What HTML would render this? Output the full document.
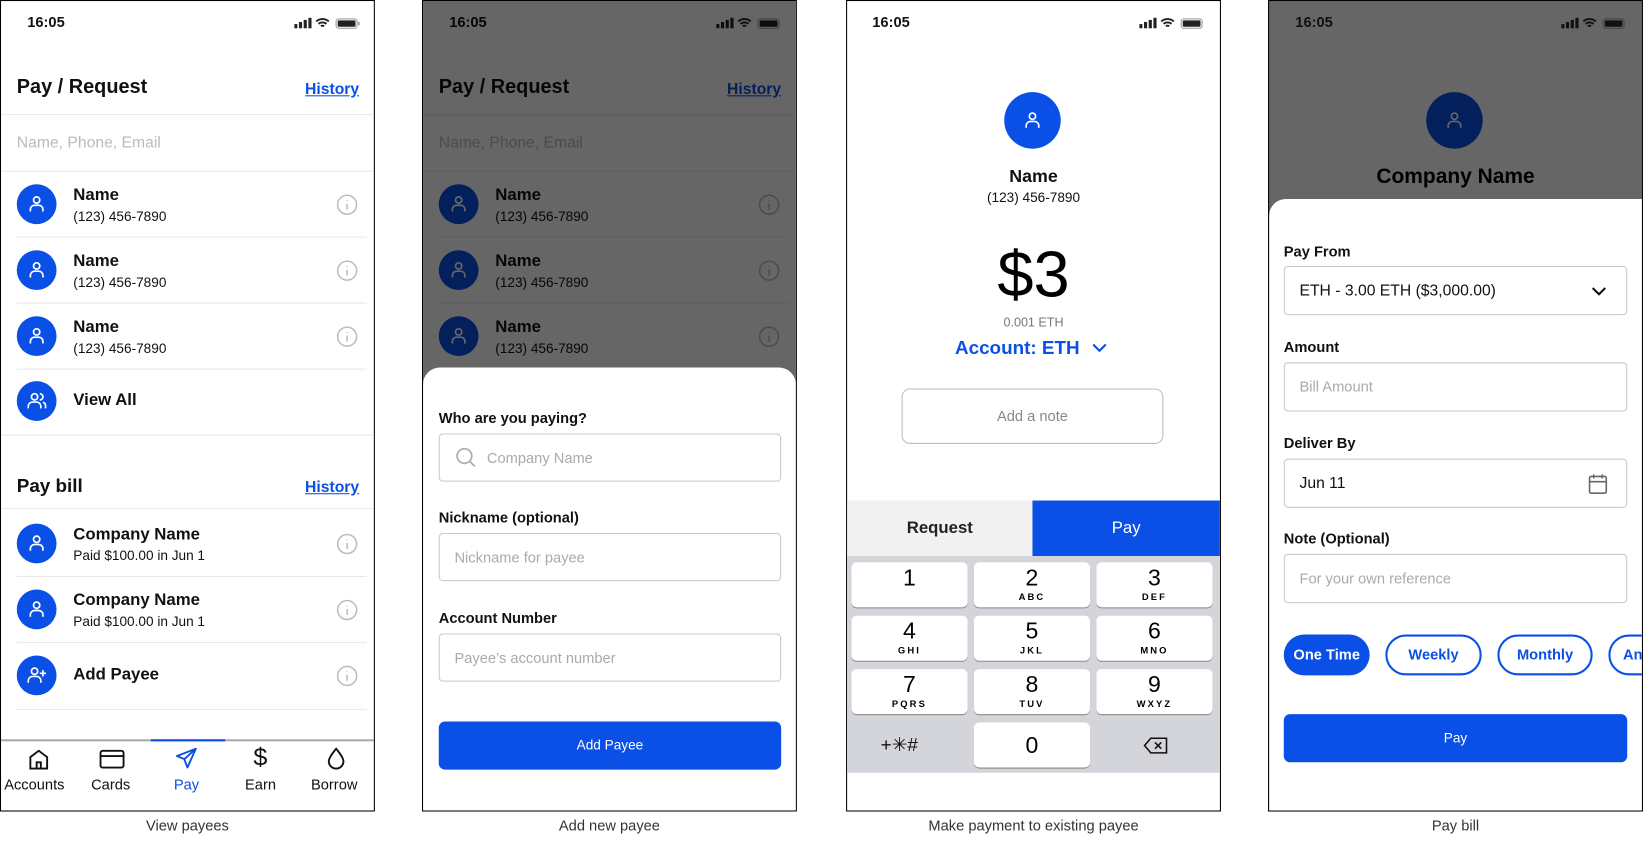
<!DOCTYPE html>
<html><head><meta charset="utf-8"><style>
*{box-sizing:border-box;margin:0;padding:0}
html,body{width:1644px;height:845px;overflow:hidden;background:#fff;font-family:"Liberation Sans",Arial,sans-serif;color:#111}
#root{position:absolute;left:0;top:0;width:1570px;height:807px;transform:scale(1.04713);transform-origin:0 0}
.fr{position:absolute;top:0;height:775px;border:1px solid #000;overflow:hidden;background:#fff}
.a{position:absolute}
.t{position:absolute;white-space:nowrap}
.cap{position:absolute;top:780px;font-size:14px;color:#333;text-align:center;width:358px}
.av{position:absolute;width:38px;height:38px;border-radius:50%;background:#0a50e6}
.av svg{position:absolute;left:9px;top:9px}
.hr{position:absolute;height:1px;background:#e8e8e8}
.nm{font-size:16px;font-weight:bold;color:#111}
.ph{font-size:13px;color:#111}
.info{position:absolute;width:21px;height:21px}
.inp{position:absolute;border:1px solid #c8c8c8;border-radius:4px;background:#fff}
.lbl{font-size:14px;font-weight:bold;color:#111}
.ph2{font-size:14px;color:#aaa}
.key{position:absolute;width:111px;height:43px;background:#fff;border-radius:5px;box-shadow:0 1px 0 #888;text-align:center}
.key b{display:block;font-weight:normal;font-size:22px;line-height:26px;margin-top:2px;color:#000}
.key i{display:block;font-style:normal;font-size:9px;font-weight:bold;letter-spacing:2px;color:#000}
.ov{position:absolute;left:0;top:0;right:0;bottom:0;background:rgba(0,0,0,0.6)}
.sb{position:absolute;top:12px;font-size:14px;font-weight:bold}
</style></head><body><div id="root">

<!-- FRAME 1 -->
<div class="fr" style="left:0;width:358px">
 <div class="sb" style="left:25px">16:05</div>
 <svg class="a" style="left:280px;top:15px" width="64" height="12" viewBox="0 0 64 12"><rect x="0" y="7" width="3" height="4" fill="#222"/><rect x="4.5" y="5" width="3" height="6" fill="#222"/><rect x="9" y="3" width="3" height="8" fill="#222"/><rect x="13.5" y="1" width="3" height="10" fill="#222"/><path d="M21 4.5a9 9 0 0 1 12 0M23.2 6.8a6 6 0 0 1 7.6 0M25.4 9a3 3 0 0 1 3.2 0" stroke="#222" stroke-width="1.8" fill="none"/><rect x="40" y="2" width="20" height="9" rx="2.5" stroke="#999" fill="none"/><rect x="41.5" y="3.5" width="17" height="6" rx="1" fill="#222"/><rect x="61" y="5" width="1.5" height="3" fill="#999"/></svg>
 <div class="t" style="left:15px;top:72px;font-size:19px;font-weight:bold">Pay / Request</div>
 <div class="t" style="right:14px;top:76px;font-size:15px;color:#0a50e6;text-decoration:underline;font-weight:bold">History</div>
 <div class="hr" style="left:0;right:0;top:108px"></div>
 <div class="t ph2" style="left:15px;top:127px;font-size:15px;color:#bbb">Name, Phone, Email</div>
 <div class="hr" style="left:0;right:0;top:162px"></div>
 <div class="av" style="left:15px;top:175px"><svg width="20" height="20" viewBox="0 0 20 20" fill="none" stroke="#fff" stroke-width="1.6"><circle cx="10" cy="6" r="3"/><path d="M4 17v-2a4 4 0 0 1 4-4h4a4 4 0 0 1 4 4v2"/></svg></div>
 <div class="t nm" style="left:69px;top:177px">Name</div><div class="t ph" style="left:69px;top:198px">(123) 456-7890</div>
 <svg class="info" style="left:320px;top:184px" viewBox="0 0 22 22" fill="none" stroke="#bbb" stroke-width="1.5"><circle cx="11" cy="11" r="9.5"/><path d="M11 10v6M11 6.5v.8"/></svg>
 <div class="hr" style="left:15px;right:7px;top:225px"></div>
 <div class="av" style="left:15px;top:238px"><svg width="20" height="20" viewBox="0 0 20 20" fill="none" stroke="#fff" stroke-width="1.6"><circle cx="10" cy="6" r="3"/><path d="M4 17v-2a4 4 0 0 1 4-4h4a4 4 0 0 1 4 4v2"/></svg></div>
 <div class="t nm" style="left:69px;top:240px">Name</div><div class="t ph" style="left:69px;top:261px">(123) 456-7890</div>
 <svg class="info" style="left:320px;top:247px" viewBox="0 0 22 22" fill="none" stroke="#bbb" stroke-width="1.5"><circle cx="11" cy="11" r="9.5"/><path d="M11 10v6M11 6.5v.8"/></svg>
 <div class="hr" style="left:15px;right:7px;top:288px"></div>
 <div class="av" style="left:15px;top:301px"><svg width="20" height="20" viewBox="0 0 20 20" fill="none" stroke="#fff" stroke-width="1.6"><circle cx="10" cy="6" r="3"/><path d="M4 17v-2a4 4 0 0 1 4-4h4a4 4 0 0 1 4 4v2"/></svg></div>
 <div class="t nm" style="left:69px;top:303px">Name</div><div class="t ph" style="left:69px;top:324px">(123) 456-7890</div>
 <svg class="info" style="left:320px;top:310px" viewBox="0 0 22 22" fill="none" stroke="#bbb" stroke-width="1.5"><circle cx="11" cy="11" r="9.5"/><path d="M11 10v6M11 6.5v.8"/></svg>
 <div class="hr" style="left:15px;right:7px;top:351px"></div>
 <div class="av" style="left:15px;top:363px"><svg width="20" height="20" viewBox="0 0 20 20" fill="none" stroke="#fff" stroke-width="1.6"><circle cx="8" cy="6" r="3"/><path d="M2 17v-2a4 4 0 0 1 4-4h4a4 4 0 0 1 4 4v2M13 3a3 3 0 0 1 0 6M16 11a4 4 0 0 1 2.5 4v2"/></svg></div>
 <div class="t nm" style="left:69px;top:373px">View All</div>
 <div class="hr" style="left:0;right:0;top:414px"></div>
 <div class="t" style="left:15px;top:453px;font-size:18px;font-weight:bold">Pay bill</div>
 <div class="t" style="right:14px;top:456px;font-size:15px;color:#0a50e6;text-decoration:underline;font-weight:bold">History</div>
 <div class="hr" style="left:0;right:0;top:484px"></div>
 <div class="av" style="left:15px;top:499px"><svg width="20" height="20" viewBox="0 0 20 20" fill="none" stroke="#fff" stroke-width="1.6"><circle cx="10" cy="6" r="3"/><path d="M4 17v-2a4 4 0 0 1 4-4h4a4 4 0 0 1 4 4v2"/></svg></div>
 <div class="t nm" style="left:69px;top:501px">Company Name</div><div class="t ph" style="left:69px;top:522px">Paid $100.00 in Jun 1</div>
 <svg class="info" style="left:320px;top:508px" viewBox="0 0 22 22" fill="none" stroke="#bbb" stroke-width="1.5"><circle cx="11" cy="11" r="9.5"/><path d="M11 10v6M11 6.5v.8"/></svg>
 <div class="hr" style="left:15px;right:7px;top:549px"></div>
 <div class="av" style="left:15px;top:562px"><svg width="20" height="20" viewBox="0 0 20 20" fill="none" stroke="#fff" stroke-width="1.6"><circle cx="10" cy="6" r="3"/><path d="M4 17v-2a4 4 0 0 1 4-4h4a4 4 0 0 1 4 4v2"/></svg></div>
 <div class="t nm" style="left:69px;top:564px">Company Name</div><div class="t ph" style="left:69px;top:585px">Paid $100.00 in Jun 1</div>
 <svg class="info" style="left:320px;top:571px" viewBox="0 0 22 22" fill="none" stroke="#bbb" stroke-width="1.5"><circle cx="11" cy="11" r="9.5"/><path d="M11 10v6M11 6.5v.8"/></svg>
 <div class="hr" style="left:15px;right:7px;top:612px"></div>
 <div class="av" style="left:15px;top:625px"><svg width="20" height="20" viewBox="0 0 20 20" fill="none" stroke="#fff" stroke-width="1.6"><circle cx="8" cy="6" r="3"/><path d="M2 17v-2a4 4 0 0 1 4-4h4a4 4 0 0 1 4 4v2M16 5v6M13 8h6"/></svg></div>
 <div class="t nm" style="left:69px;top:635px">Add Payee</div>
 <svg class="info" style="left:320px;top:634px" viewBox="0 0 22 22" fill="none" stroke="#bbb" stroke-width="1.5"><circle cx="11" cy="11" r="9.5"/><path d="M11 10v6M11 6.5v.8"/></svg>
 <div class="hr" style="left:15px;right:7px;top:676px"></div>
 <div class="a" style="left:0;right:0;top:705px;height:2px;background:#aaa"></div>
 <div class="a" style="left:143px;width:71px;top:705px;height:2px;background:#0a50e6"></div>
 <svg class="a" style="left:25px;top:713px" width="22" height="22" viewBox="0 0 22 22" fill="none" stroke="#111" stroke-width="1.8"><path d="M3 20V9l8-6 8 6v11zM9 20v-6h4v6"/></svg>
 <svg class="a" style="left:94px;top:713px" width="24" height="22" viewBox="0 0 24 22" fill="none" stroke="#111" stroke-width="1.8"><rect x="1" y="3" width="22" height="16" rx="2"/><path d="M1 8h22"/></svg>
 <svg class="a" style="left:166px;top:712px" width="22" height="22" viewBox="0 0 22 22" fill="none" stroke="#0a50e6" stroke-width="1.8" stroke-linejoin="round"><path d="M20 2L2 9l7 3 3 8zM9 12l11-10"/></svg>
 <div class="t" style="left:241px;top:709px;font-size:24px;color:#111">$</div>
 <svg class="a" style="left:310px;top:712px" width="20" height="22" viewBox="0 0 20 22" fill="none" stroke="#111" stroke-width="1.8"><path d="M10 2C10 2 3 10 3 14a7 7 0 0 0 14 0c0-4-7-12-7-12z"/></svg>
 <div class="t" style="left:3px;top:740px;font-size:14px">Accounts</div>
 <div class="t" style="left:86px;top:740px;font-size:14px">Cards</div>
 <div class="t" style="left:165px;top:740px;font-size:14px;color:#0a50e6">Pay</div>
 <div class="t" style="left:233px;top:740px;font-size:14px">Earn</div>
 <div class="t" style="left:296px;top:740px;font-size:14px">Borrow</div>
</div>
<div class="cap" style="left:0">View payees</div>

<!-- FRAME 2 -->
<div class="fr" style="left:403px;width:358px">
 <div class="sb" style="left:25px">16:05</div>
 <svg class="a" style="left:280px;top:15px" width="64" height="12" viewBox="0 0 64 12"><rect x="0" y="7" width="3" height="4" fill="#222"/><rect x="4.5" y="5" width="3" height="6" fill="#222"/><rect x="9" y="3" width="3" height="8" fill="#222"/><rect x="13.5" y="1" width="3" height="10" fill="#222"/><path d="M21 4.5a9 9 0 0 1 12 0M23.2 6.8a6 6 0 0 1 7.6 0M25.4 9a3 3 0 0 1 3.2 0" stroke="#222" stroke-width="1.8" fill="none"/><rect x="40" y="2" width="20" height="9" rx="2.5" stroke="#999" fill="none"/><rect x="41.5" y="3.5" width="17" height="6" rx="1" fill="#222"/></svg>
 <div class="t" style="left:15px;top:72px;font-size:19px;font-weight:bold">Pay / Request</div>
 <div class="t" style="right:14px;top:76px;font-size:15px;color:#0a50e6;text-decoration:underline;font-weight:bold">History</div>
 <div class="hr" style="left:0;right:0;top:108px"></div>
 <div class="t" style="left:15px;top:127px;font-size:15px;color:#bbb">Name, Phone, Email</div>
 <div class="hr" style="left:0;right:0;top:162px"></div>
 <div class="av" style="left:15px;top:175px"><svg width="20" height="20" viewBox="0 0 20 20" fill="none" stroke="#fff" stroke-width="1.6"><circle cx="10" cy="6" r="3"/><path d="M4 17v-2a4 4 0 0 1 4-4h4a4 4 0 0 1 4 4v2"/></svg></div>
 <div class="t nm" style="left:69px;top:177px">Name</div><div class="t ph" style="left:69px;top:198px">(123) 456-7890</div>
 <svg class="info" style="left:320px;top:184px" viewBox="0 0 22 22" fill="none" stroke="#bbb" stroke-width="1.5"><circle cx="11" cy="11" r="9.5"/><path d="M11 10v6M11 6.5v.8"/></svg>
 <div class="hr" style="left:15px;right:7px;top:225px"></div>
 <div class="av" style="left:15px;top:238px"><svg width="20" height="20" viewBox="0 0 20 20" fill="none" stroke="#fff" stroke-width="1.6"><circle cx="10" cy="6" r="3"/><path d="M4 17v-2a4 4 0 0 1 4-4h4a4 4 0 0 1 4 4v2"/></svg></div>
 <div class="t nm" style="left:69px;top:240px">Name</div><div class="t ph" style="left:69px;top:261px">(123) 456-7890</div>
 <svg class="info" style="left:320px;top:247px" viewBox="0 0 22 22" fill="none" stroke="#bbb" stroke-width="1.5"><circle cx="11" cy="11" r="9.5"/><path d="M11 10v6M11 6.5v.8"/></svg>
 <div class="hr" style="left:15px;right:7px;top:288px"></div>
 <div class="av" style="left:15px;top:301px"><svg width="20" height="20" viewBox="0 0 20 20" fill="none" stroke="#fff" stroke-width="1.6"><circle cx="10" cy="6" r="3"/><path d="M4 17v-2a4 4 0 0 1 4-4h4a4 4 0 0 1 4 4v2"/></svg></div>
 <div class="t nm" style="left:69px;top:303px">Name</div><div class="t ph" style="left:69px;top:324px">(123) 456-7890</div>
 <svg class="info" style="left:320px;top:310px" viewBox="0 0 22 22" fill="none" stroke="#bbb" stroke-width="1.5"><circle cx="11" cy="11" r="9.5"/><path d="M11 10v6M11 6.5v.8"/></svg>
 <div class="ov"></div>
 <div class="a" style="left:0;right:0;top:350px;bottom:0;background:#fff;border-radius:16px 16px 0 0"></div>
 <div class="t lbl" style="left:15px;top:390px">Who are you paying?</div>
 <div class="inp" style="left:15px;width:327px;top:413px;height:46px"></div>
 <svg class="a" style="left:31px;top:426px" width="20" height="20" viewBox="0 0 20 20" fill="none" stroke="#aaa" stroke-width="1.6"><circle cx="8.5" cy="8.5" r="7"/><path d="M13.5 13.5l5 5"/></svg>
 <div class="t ph2" style="left:61px;top:428px">Company Name</div>
 <div class="t lbl" style="left:15px;top:485px">Nickname (optional)</div>
 <div class="inp" style="left:15px;width:327px;top:508px;height:46px"></div>
 <div class="t ph2" style="left:30px;top:523px">Nickname for payee</div>
 <div class="t lbl" style="left:15px;top:581px">Account Number</div>
 <div class="inp" style="left:15px;width:327px;top:604px;height:46px"></div>
 <div class="t ph2" style="left:30px;top:619px">Payee’s account number</div>
 <div class="a" style="left:15px;width:327px;top:688px;height:46px;background:#0a50e6;border-radius:6px;color:#fff;font-size:13px;text-align:center;line-height:46px">Add Payee</div>
</div>
<div class="cap" style="left:403px">Add new payee</div>

<!-- FRAME 3 -->
<div class="fr" style="left:808px;width:358px">
 <div class="sb" style="left:24px">16:05</div>
 <svg class="a" style="left:279px;top:15px" width="64" height="12" viewBox="0 0 64 12"><rect x="0" y="7" width="3" height="4" fill="#222"/><rect x="4.5" y="5" width="3" height="6" fill="#222"/><rect x="9" y="3" width="3" height="8" fill="#222"/><rect x="13.5" y="1" width="3" height="10" fill="#222"/><path d="M21 4.5a9 9 0 0 1 12 0M23.2 6.8a6 6 0 0 1 7.6 0M25.4 9a3 3 0 0 1 3.2 0" stroke="#222" stroke-width="1.8" fill="none"/><rect x="40" y="2" width="20" height="9" rx="2.5" stroke="#999" fill="none"/><rect x="41.5" y="3.5" width="17" height="6" rx="1" fill="#222"/></svg>
 <div class="a" style="left:150px;top:87px;width:54px;height:54px;border-radius:50%;background:#0a50e6"><svg style="position:absolute;left:17px;top:17px" width="20" height="20" viewBox="0 0 20 20" fill="none" stroke="#fff" stroke-width="1.6"><circle cx="10" cy="6" r="3"/><path d="M4 17v-2a4 4 0 0 1 4-4h4a4 4 0 0 1 4 4v2"/></svg></div>
 <div class="t" style="left:0;width:356px;text-align:center;top:158px;font-size:17px;font-weight:bold">Name</div>
 <div class="t" style="left:0;width:356px;text-align:center;top:180px;font-size:13px">(123) 456-7890</div>
 <div class="t" style="left:0;width:356px;text-align:center;top:226px;font-size:62px;color:#000">$3</div>
 <div class="t" style="left:0;width:356px;text-align:center;top:300px;font-size:12px;color:#777">0.001 ETH</div>
 <div class="t" style="left:103px;top:321px;font-size:18px;color:#0a50e6;font-weight:bold">Account: ETH</div>
 <svg class="a" style="left:233px;top:325px" width="16" height="12" viewBox="0 0 16 12" fill="none" stroke="#0a50e6" stroke-width="2"><path d="M2 3l6 6 6-6"/></svg>
 <div class="a" style="left:52px;width:250px;top:370px;height:53px;border:1px solid #bbb;border-radius:8px;text-align:center;line-height:51px;font-size:14px;color:#888">Add a note</div>
 <div class="a" style="left:0;width:177px;top:477px;height:53px;background:#f1f1f1;text-align:center;line-height:53px;font-size:16px;font-weight:bold;color:#222">Request</div>
 <div class="a" style="left:177px;right:0;top:477px;height:53px;background:#0a50e6;text-align:center;line-height:53px;font-size:16px;color:#fff">Pay</div>
 <div class="a" style="left:0;right:0;top:530px;height:207px;background:#d3d5da"></div>
 <div class="key" style="left:4px;top:536px"><b>1</b></div>
 <div class="key" style="left:121px;top:536px"><b>2</b><i>ABC</i></div>
 <div class="key" style="left:238px;top:536px"><b>3</b><i>DEF</i></div>
 <div class="key" style="left:4px;top:587px"><b>4</b><i>GHI</i></div>
 <div class="key" style="left:121px;top:587px"><b>5</b><i>JKL</i></div>
 <div class="key" style="left:238px;top:587px"><b>6</b><i>MNO</i></div>
 <div class="key" style="left:4px;top:638px"><b>7</b><i>PQRS</i></div>
 <div class="key" style="left:121px;top:638px"><b>8</b><i>TUV</i></div>
 <div class="key" style="left:238px;top:638px"><b>9</b><i>WXYZ</i></div>
 <div class="t" style="left:32px;top:700px;font-size:18px;color:#111">+✳#</div>
 <div class="key" style="left:121px;top:689px"><b style="margin-top:9px">0</b></div>
 <svg class="a" style="left:282px;top:702px" width="26" height="18" viewBox="0 0 26 18" fill="none" stroke="#111" stroke-width="1.5"><path d="M8 2h15v14H8L2 9z"/><path d="M12 6l6 6M18 6l-6 6"/></svg>
</div>
<div class="cap" style="left:808px">Make payment to existing payee</div>

<!-- FRAME 4 -->
<div class="fr" style="left:1211px;width:358px;background:#666">
 <div class="sb" style="left:25px;color:#111">16:05</div>
 <svg class="a" style="left:279px;top:15px" width="64" height="12" viewBox="0 0 64 12"><rect x="0" y="7" width="3" height="4" fill="#111"/><rect x="4.5" y="5" width="3" height="6" fill="#111"/><rect x="9" y="3" width="3" height="8" fill="#111"/><rect x="13.5" y="1" width="3" height="10" fill="#111"/><path d="M21 4.5a9 9 0 0 1 12 0M23.2 6.8a6 6 0 0 1 7.6 0M25.4 9a3 3 0 0 1 3.2 0" stroke="#111" stroke-width="1.8" fill="none"/><rect x="40" y="2" width="20" height="9" rx="2.5" stroke="#444" fill="none"/><rect x="41.5" y="3.5" width="17" height="6" rx="1" fill="#111"/></svg>
 <div class="a" style="left:150px;top:87px;width:54px;height:54px;border-radius:50%;background:#04205c"><svg style="position:absolute;left:17px;top:17px" width="20" height="20" viewBox="0 0 20 20" fill="none" stroke="#666" stroke-width="1.6"><circle cx="10" cy="6" r="3"/><path d="M4 17v-2a4 4 0 0 1 4-4h4a4 4 0 0 1 4 4v2"/></svg></div>
 <div class="t" style="left:0;width:356px;text-align:center;top:157px;font-size:20px;font-weight:bold;color:#000">Company Name</div>
 <div class="a" style="left:0;width:400px;top:189px;bottom:0;background:#fff;border-radius:16px 0 0 0"></div>
 <div class="t lbl" style="left:14px;top:231px">Pay From</div>
 <div class="inp" style="left:14px;width:328px;top:253px;height:47px"></div>
 <div class="t" style="left:29px;top:268px;font-size:15px;color:#111">ETH - 3.00 ETH ($3,000.00)</div>
 <svg class="a" style="left:307px;top:271px" width="16" height="12" viewBox="0 0 16 12" fill="none" stroke="#111" stroke-width="2"><path d="M2 3l6 6 6-6"/></svg>
 <div class="t lbl" style="left:14px;top:322px">Amount</div>
 <div class="inp" style="left:14px;width:328px;top:345px;height:47px"></div>
 <div class="t ph2" style="left:29px;top:360px">Bill Amount</div>
 <div class="t lbl" style="left:14px;top:414px">Deliver By</div>
 <div class="inp" style="left:14px;width:328px;top:437px;height:47px"></div>
 <div class="t" style="left:29px;top:452px;font-size:15px;color:#111">Jun 11</div>
 <svg class="a" style="left:304px;top:450px" width="20" height="22" viewBox="0 0 20 22" fill="none" stroke="#666" stroke-width="1.5"><rect x="2" y="4" width="16" height="16" rx="1.5"/><path d="M2 9h16M6 2v4M14 2v4"/></svg>
 <div class="t lbl" style="left:14px;top:505px">Note (Optional)</div>
 <div class="inp" style="left:14px;width:328px;top:528px;height:47px"></div>
 <div class="t ph2" style="left:29px;top:543px">For your own reference</div>
 <div class="a" style="left:14px;width:82px;top:605px;height:39px;border-radius:20px;background:#0a50e6;color:#fff;font-size:14px;font-weight:bold;text-align:center;line-height:39px">One Time</div>
 <div class="a" style="left:111px;width:92px;top:605px;height:39px;border-radius:20px;border:2px solid #0a50e6;color:#0a50e6;font-size:14px;font-weight:bold;text-align:center;line-height:35px">Weekly</div>
 <div class="a" style="left:218px;width:91px;top:605px;height:39px;border-radius:20px;border:2px solid #0a50e6;color:#0a50e6;font-size:14px;font-weight:bold;text-align:center;line-height:35px">Monthly</div>
 <div class="a" style="left:324px;width:92px;top:605px;height:39px;border-radius:20px;border:2px solid #0a50e6;color:#0a50e6;font-size:14px;font-weight:bold;line-height:35px;padding-left:12px">Annually</div>
 <div class="a" style="left:14px;width:328px;top:681px;height:46px;background:#0a50e6;border-radius:6px;color:#fff;font-size:13px;text-align:center;line-height:46px">Pay</div>
</div>
<div class="cap" style="left:1211px">Pay bill</div>

</div></body></html>
